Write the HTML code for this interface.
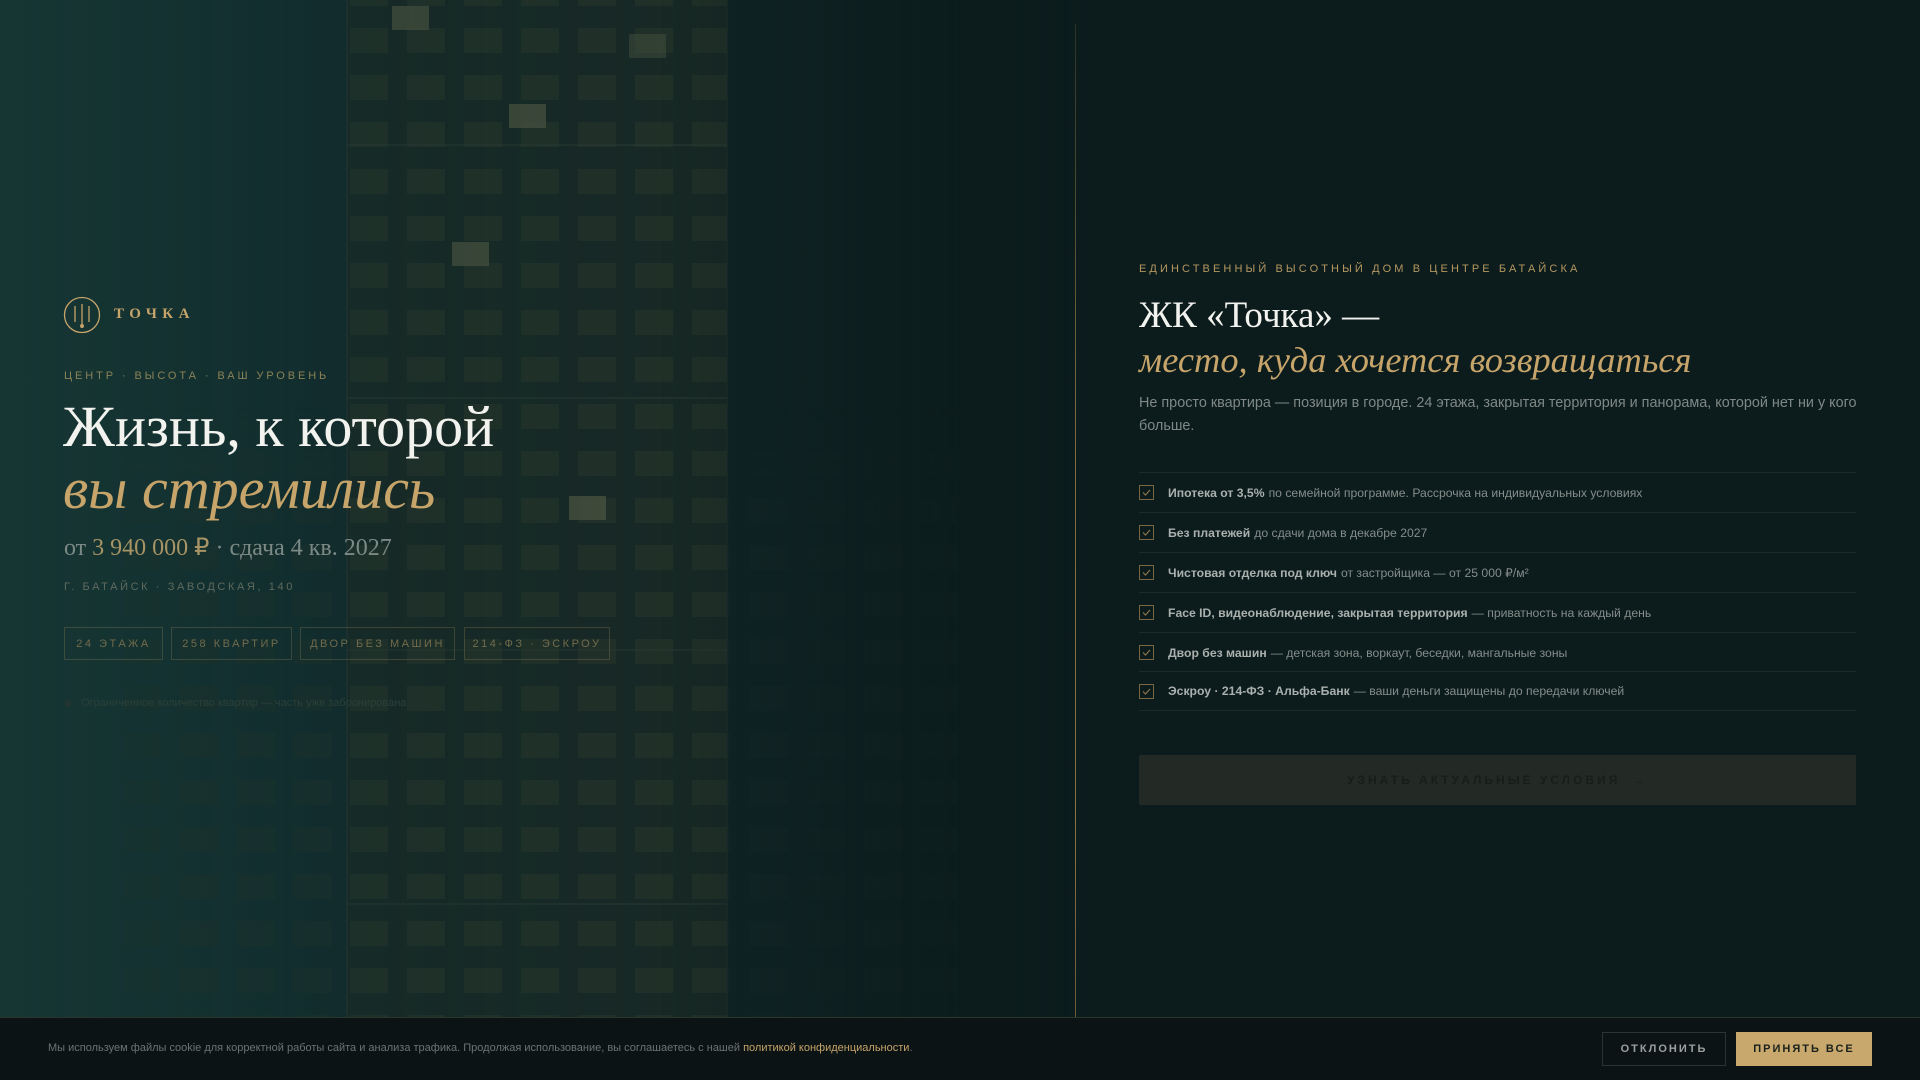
<!DOCTYPE html>
<html><head><meta charset="utf-8"><style>
*{margin:0;padding:0;box-sizing:border-box}
html,body{width:1920px;height:1080px;overflow:hidden;background:#0c1c1d;font-family:"Liberation Sans",sans-serif}
.bg{position:absolute;left:0;top:0;width:1920px;height:1080px;background:linear-gradient(90deg,#173836 0%,#122c2d 18%,#10272a 30%,#0f2120 47%,#0c1c1d 56%,#0c1c1d 100%)}
svg.b{position:absolute;left:0;top:0}
.ov{position:absolute;left:0;top:0;width:1100px;height:1080px;background:linear-gradient(90deg,rgba(20,52,50,.35) 0%,rgba(16,40,42,.15) 40%,rgba(12,28,29,.0) 60%,rgba(12,28,29,.6) 80%,rgba(12,28,29,1) 100%)}
.abs{position:absolute;white-space:nowrap}
.gold{color:#c6a46a}
.serif{font-family:"Liberation Serif",serif}
.tag{position:absolute;top:627px;height:33px;border:1px solid rgba(160,140,90,.28);color:#726b4c;font-size:11px;letter-spacing:2.5px;display:flex;align-items:center;justify-content:center}
.row{position:absolute;left:1139px;width:717px;height:40px;border-top:1px solid #1c2a28;display:flex;align-items:center;font-size:12.2px;color:#858d8a}
.row b{color:#aab0ad;margin-right:4px}
.cb{width:15px;height:15px;border:1px solid #7a6640;margin-right:14px;display:flex;align-items:center;justify-content:center}
</style></head><body>
<div class="bg"></div>
<svg class="b" width="1100" height="1017">
<defs>
<pattern id="w" x="350" y="28" width="57" height="47" patternUnits="userSpaceOnUse"><rect width="38" height="25" fill="#243429" opacity=".75"/></pattern>
<pattern id="w2" x="123" y="28" width="57" height="47" patternUnits="userSpaceOnUse"><rect width="38" height="25" fill="#22332c" opacity=".35"/></pattern>
<linearGradient id="fd" x1="0" y1="0" x2="0" y2="1"><stop offset="0" stop-color="#fff" stop-opacity="0"/><stop offset=".4" stop-color="#fff" stop-opacity="0"/><stop offset=".55" stop-color="#fff" stop-opacity="1"/><stop offset="1" stop-color="#fff" stop-opacity="1"/></linearGradient>
<mask id="m"><rect x="0" y="0" width="1100" height="1017" fill="url(#fd)"/></mask>
</defs>
<rect x="347" y="0" width="380" height="1017" fill="#1a2a26" opacity=".8"/>
<rect x="347" y="0" width="380" height="1017" fill="url(#w)"/>
<g mask="url(#m)"><rect x="120" y="0" width="227" height="1017" fill="url(#w2)"/><rect x="727" y="0" width="230" height="1017" fill="url(#w2)" opacity=".5"/></g>
<line x1="347" y1="0" x2="347" y2="1017" stroke="#2a3a33" stroke-width="1"/>
<line x1="727" y1="0" x2="727" y2="1017" stroke="#22302b" stroke-width="1"/>
<line x1="347" y1="145" x2="727" y2="145" stroke="#2c3b33"/>
<line x1="347" y1="398" x2="727" y2="398" stroke="#2c3b33"/>
<line x1="347" y1="650" x2="727" y2="650" stroke="#2a3831"/>
<line x1="347" y1="904" x2="727" y2="904" stroke="#2a3831"/>
<g fill="#46513f" opacity=".85">
<rect x="392" y="6" width="37" height="24"/><rect x="629" y="34" width="37" height="24" opacity=".6"/><rect x="509" y="104" width="37" height="24"/><rect x="452" y="242" width="37" height="24"/><rect x="569" y="496" width="37" height="24"/>
</g>
</svg>
<div class="ov"></div>

<svg class="abs" style="left:63px;top:296px" width="38" height="38" viewBox="0 0 38 38" fill="none" stroke="#c6a46a" stroke-width="1.3"><circle cx="19" cy="19" r="17.5"/><line x1="12" y1="10" x2="12" y2="26"/><line x1="26" y1="10" x2="26" y2="26"/><line x1="19" y1="8" x2="19" y2="29"/><circle cx="19" cy="30" r="1.3" fill="#c6a46a"/></svg>
<div class="abs serif gold" style="left:114px;top:306px;font-size:15px;font-weight:bold;letter-spacing:5.4px">ТОЧКА</div>
<div class="abs" style="left:64px;top:370px;font-size:11px;letter-spacing:2.9px;color:#8a8258">ЦЕНТР · ВЫСОТА · ВАШ УРОВЕНЬ</div>
<div class="abs serif" style="left:63px;top:396px;font-size:58px;line-height:62px;color:#f2f2ee">Жизнь, к которой</div>
<div class="abs serif gold" style="left:63px;top:458px;font-size:58px;line-height:62px;font-style:italic">вы стремились</div>
<div class="abs serif" style="left:64px;top:533px;font-size:24px;color:#7c8a86">от <span style="color:#a69465">3 940 000 ₽</span> · сдача 4 кв. 2027</div>
<div class="abs" style="left:64px;top:581px;font-size:11px;letter-spacing:2.6px;color:#5f6a5e">Г. БАТАЙСК · ЗАВОДСКАЯ, 140</div>
<div class="tag" style="left:64px;width:99px">24 ЭТАЖА</div>
<div class="tag" style="left:171px;width:121px">258 КВАРТИР</div>
<div class="tag" style="left:300px;width:155px">ДВОР БЕЗ МАШИН</div>
<div class="tag" style="left:464px;width:146px">214-ФЗ · ЭСКРОУ</div>
<div class="abs" style="left:64px;top:700px;width:7px;height:7px;border-radius:50%;background:#22342f"></div>
<div class="abs" style="left:81px;top:697px;font-size:11px;color:#2c4039">Ограниченное количество квартир — часть уже забронирована</div>

<div class="abs" style="left:1075px;top:24px;width:1px;height:993px;background:linear-gradient(#2a3328,#7d6a40 40%,#8a7346 80%,#6b5a38)"></div>

<div class="abs gold" style="left:1139px;top:263px;font-size:11px;letter-spacing:3.1px;color:#b59760">ЕДИНСТВЕННЫЙ ВЫСОТНЫЙ ДОМ В ЦЕНТРЕ БАТАЙСКА</div>
<div class="abs serif" style="left:1139px;top:294px;font-size:37px;line-height:44px;color:#f2f2ee">ЖК «Точка» —</div>
<div class="abs serif gold" style="left:1139px;top:338px;font-size:36.4px;line-height:44px;font-style:italic">место, куда хочется возвращаться</div>
<div class="abs" style="left:1139px;top:392px;width:730px;white-space:normal;font-size:14.4px;line-height:23px;color:#7f8885">Не просто квартира — позиция в городе. 24 этажа, закрытая территория и панорама, которой нет ни у кого больше.</div>

<div class="row" style="top:472px"><div class="cb"><svg width="9" height="7" viewBox="0 0 9 7"><path d="M1 3.5L3.5 6L8 1" fill="none" stroke="#8a7448" stroke-width="1.2"/></svg></div><b>Ипотека от 3,5%</b>по семейной программе. Рассрочка на индивидуальных условиях</div>
<div class="row" style="top:512px"><div class="cb"><svg width="9" height="7" viewBox="0 0 9 7"><path d="M1 3.5L3.5 6L8 1" fill="none" stroke="#8a7448" stroke-width="1.2"/></svg></div><b>Без платежей</b>до сдачи дома в декабре 2027</div>
<div class="row" style="top:552px"><div class="cb"><svg width="9" height="7" viewBox="0 0 9 7"><path d="M1 3.5L3.5 6L8 1" fill="none" stroke="#8a7448" stroke-width="1.2"/></svg></div><b>Чистовая отделка под ключ</b>от застройщика — от 25 000 ₽/м²</div>
<div class="row" style="top:592px"><div class="cb"><svg width="9" height="7" viewBox="0 0 9 7"><path d="M1 3.5L3.5 6L8 1" fill="none" stroke="#8a7448" stroke-width="1.2"/></svg></div><b>Face ID, видеонаблюдение, закрытая территория</b>— приватность на каждый день</div>
<div class="row" style="top:632px"><div class="cb"><svg width="9" height="7" viewBox="0 0 9 7"><path d="M1 3.5L3.5 6L8 1" fill="none" stroke="#8a7448" stroke-width="1.2"/></svg></div><b>Двор без машин</b>— детская зона, воркаут, беседки, мангальные зоны</div>
<div class="row" style="top:671px;border-bottom:1px solid #1c2a28"><div class="cb"><svg width="9" height="7" viewBox="0 0 9 7"><path d="M1 3.5L3.5 6L8 1" fill="none" stroke="#8a7448" stroke-width="1.2"/></svg></div><b>Эскроу · 214-ФЗ · Альфа-Банк</b>— ваши деньги защищены до передачи ключей</div>

<div class="abs" style="left:1139px;top:755px;width:717px;height:50px;background:#232a25;display:flex;align-items:center;justify-content:center;font-size:12px;font-weight:bold;letter-spacing:3px;color:#171d1a">УЗНАТЬ АКТУАЛЬНЫЕ УСЛОВИЯ&nbsp;&nbsp;→</div>

<div class="abs" style="left:0;top:1017px;width:1920px;height:63px;background:#0b1315;border-top:1px solid #2a3629"></div>
<div class="abs" style="left:48px;top:1042px;font-size:11px;color:#6b7472">Мы используем файлы cookie для корректной работы сайта и анализа трафика. Продолжая использование, вы соглашаетесь с нашей <span style="color:#c6a46a">политикой конфиденциальности</span>.</div>
<div class="abs" style="left:1602px;top:1032px;width:124px;height:34px;border:1px solid #2c3432;display:flex;align-items:center;justify-content:center;font-size:11px;font-weight:bold;letter-spacing:2px;color:#9aa19e">ОТКЛОНИТЬ</div>
<div class="abs" style="left:1736px;top:1032px;width:136px;height:34px;background:#c8a86c;display:flex;align-items:center;justify-content:center;font-size:11px;font-weight:bold;letter-spacing:2px;color:#1a211d">ПРИНЯТЬ ВСЕ</div>
</body></html>
